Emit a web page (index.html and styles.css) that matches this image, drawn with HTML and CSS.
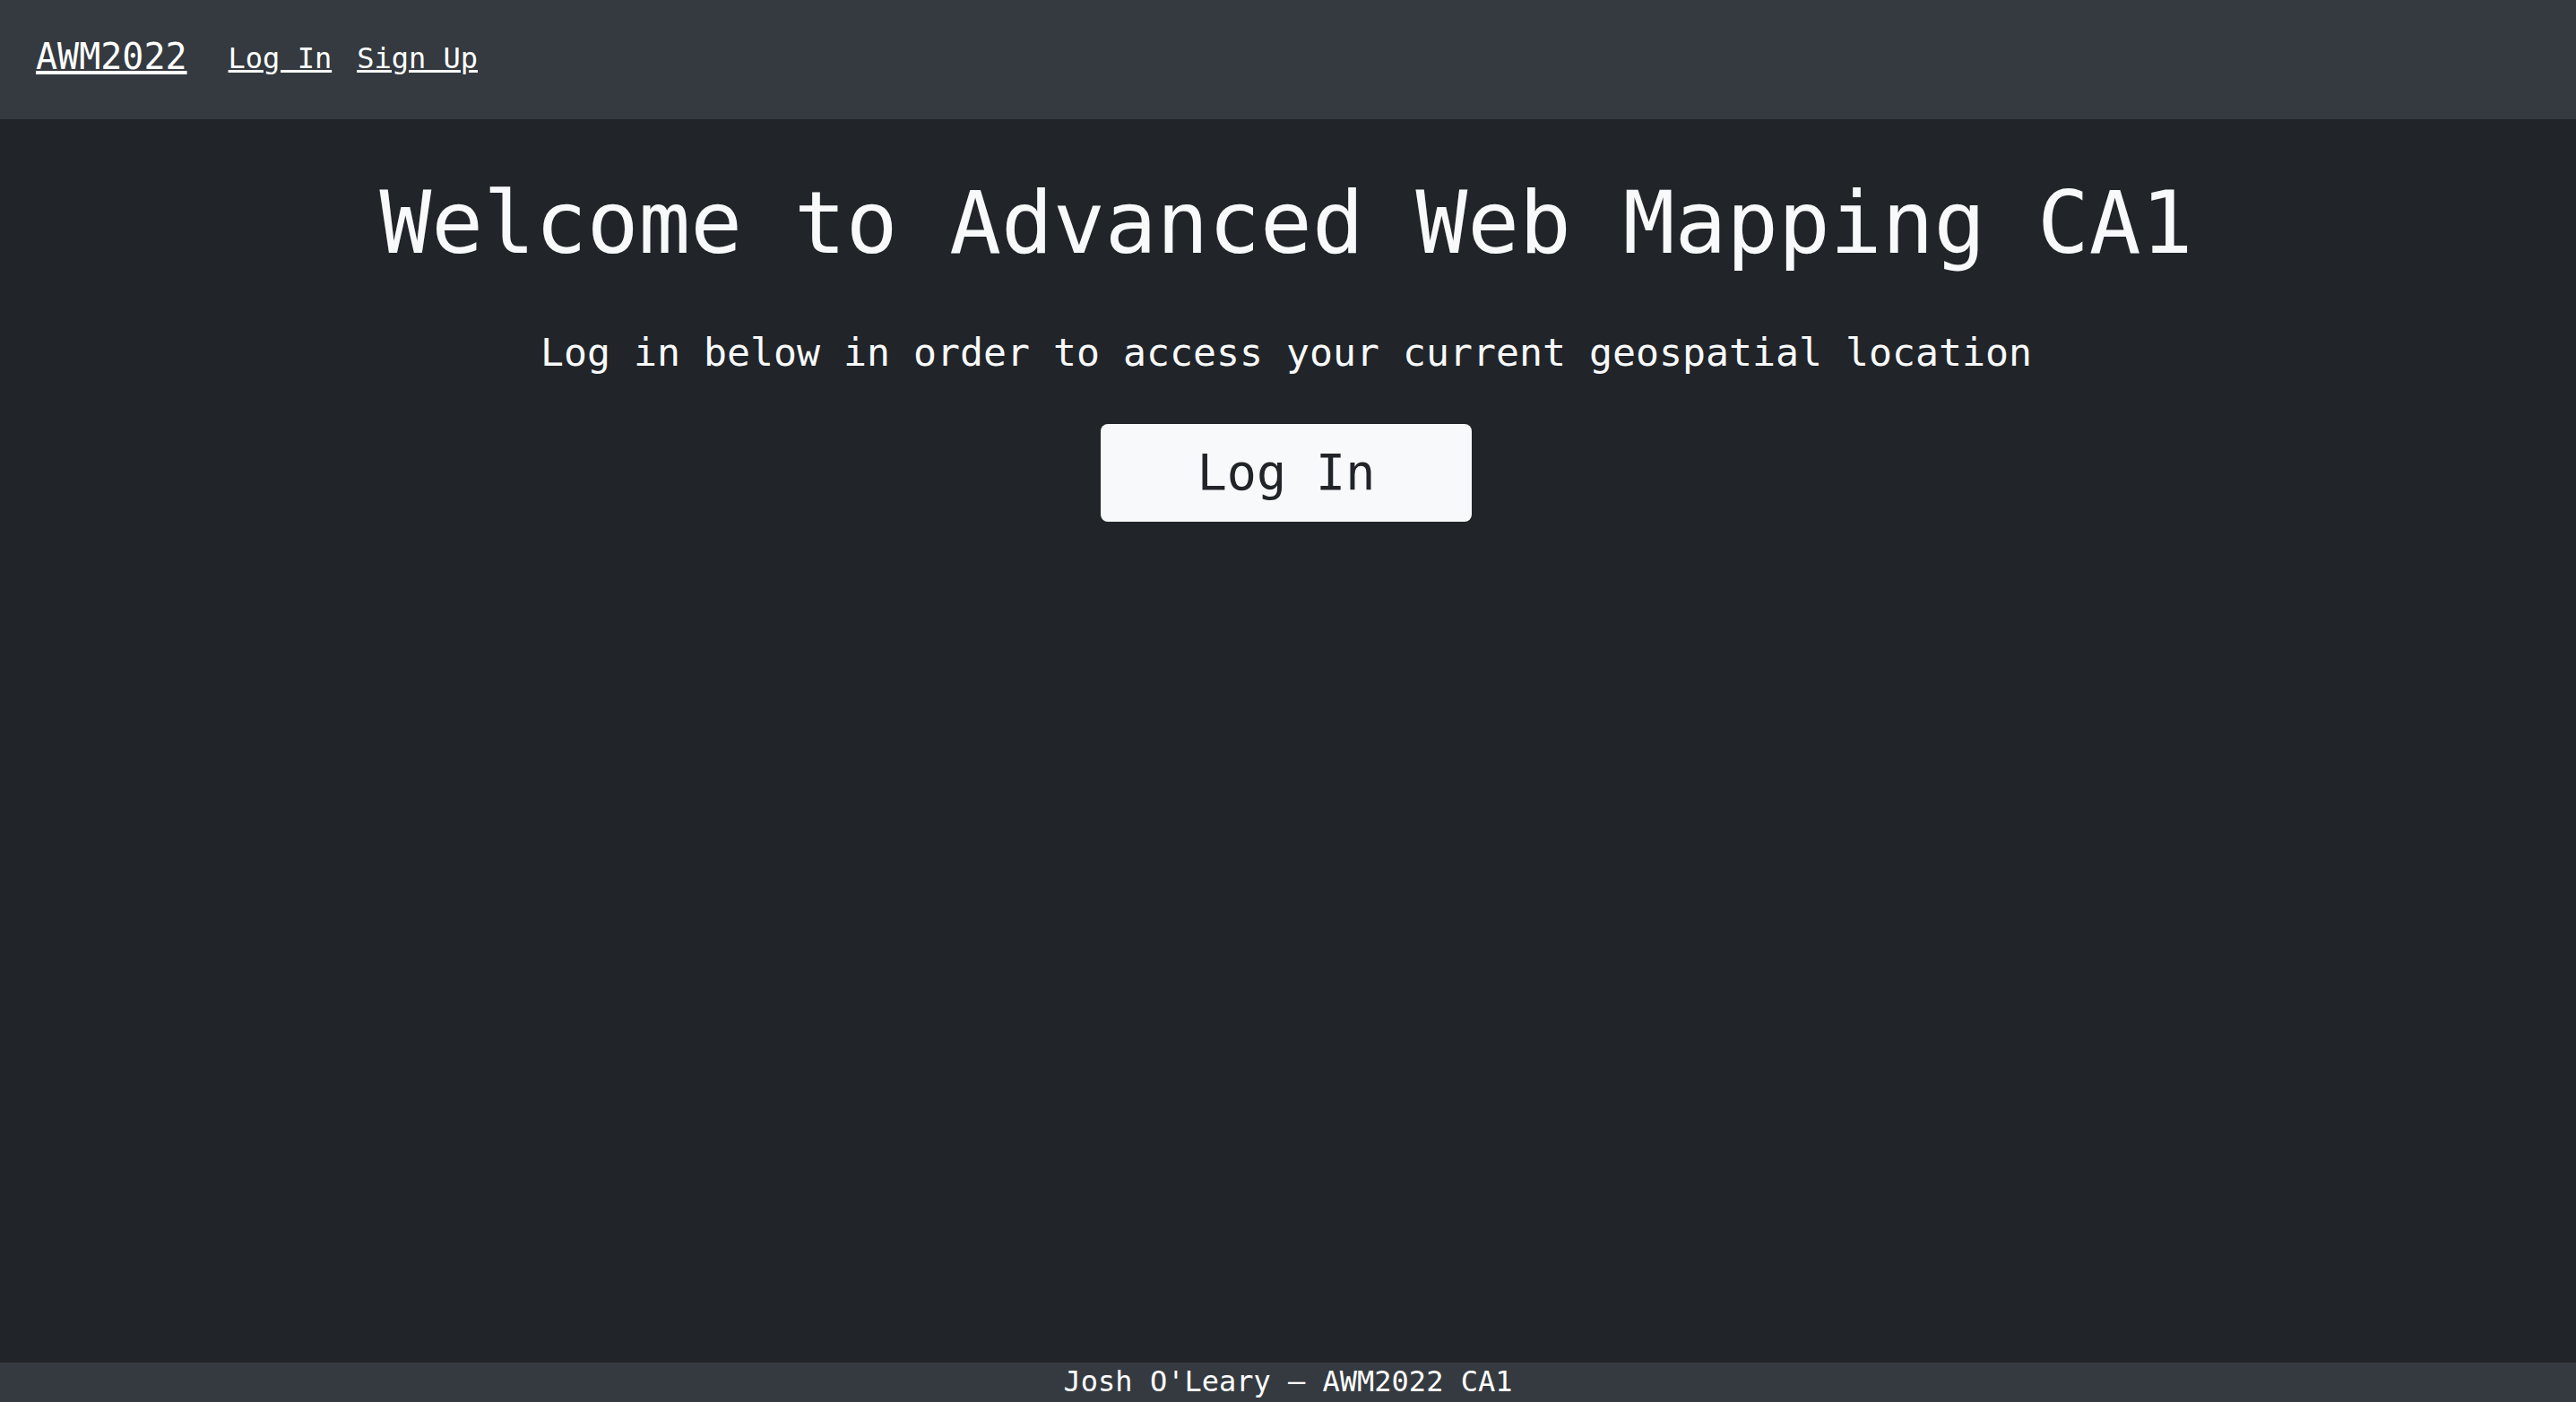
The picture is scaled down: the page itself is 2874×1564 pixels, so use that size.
FILE: index.html
```html
<!DOCTYPE html>
<html lang="en">
<head>
<meta charset="utf-8">
<title>AWM2022</title>
<link rel="stylesheet" href="styles.css">
</head>
<body>
<div class="page">
  <nav class="navbar">
    <a class="brand" href="#">AWM2022</a>
    <ul class="nav">
      <li><a class="nav-link" href="#">Log In</a></li>
      <li><a class="nav-link" href="#">Sign Up</a></li>
    </ul>
  </nav>
  <main class="main">
    <h1 class="title">Welcome to Advanced Web Mapping CA1</h1>
    <p class="lead">Log in below in order to access your current geospatial location</p>
    <a class="btn" href="#">Log In</a>
  </main>
  <footer class="footer">Josh O'Leary &mdash; AWM2022 CA1</footer>
</div>
</body>
</html>
```

FILE: styles.css
```css
html, body {
  margin: 0;
  padding: 0;
  height: 100%;
}
body {
  background: #212529;
  color: #f8f9fa;
  font-family: "DejaVu Sans Mono", monospace;
  font-size: 32px;
  line-height: 1.5;
}
.page {
  display: flex;
  flex-direction: column;
  height: 100%;
}
.navbar {
  box-sizing: border-box;
  height: 133px;
  flex: 0 0 133px;
  background: #343a40;
  display: flex;
  align-items: flex-start;
  padding: 0 0 0 40px;
}
.brand {
  margin-top: 33px;
  color: #ffffff;
  font-size: 40px;
  line-height: 60px;
  text-decoration: underline;
  margin-right: 46px;
}
.nav {
  margin: 41px 0 0;
  list-style: none;
  padding: 0;
  display: flex;
  gap: 28px;
}
.nav-link {
  color: #ffffff;
  font-size: 32px;
  line-height: 48px;
  text-decoration: underline;
}
.main {
  flex: 1 1 auto;
  display: flex;
  flex-direction: column;
  align-items: center;
  text-align: center;
  padding-right: 4px;
}
.title {
  margin: 59px 0 0;
  font-size: 96px;
  font-weight: 400;
  line-height: 1.2;
  color: #f8f9fa;
}
.lead {
  margin: 54px 0 0;
  font-size: 43.2px;
  line-height: 1.5;
  color: #f8f9fa;
}
.btn {
  margin-top: 47px;
  box-sizing: border-box;
  width: 414px;
  height: 109px;
  padding: 12.5px 0;
  background: #f8f9fa;
  color: #212529;
  font-size: 55px;
  line-height: 84px;
  text-align: center;
  text-decoration: none;
  border-radius: 8px;
}
.footer {
  box-sizing: border-box;
  flex: 0 0 44px;
  height: 44px;
  background: #343a40;
  color: #ffffff;
  font-size: 32px;
  line-height: 38px;
  padding-top: 2px;
  text-align: center;
  overflow: hidden;
}
```
